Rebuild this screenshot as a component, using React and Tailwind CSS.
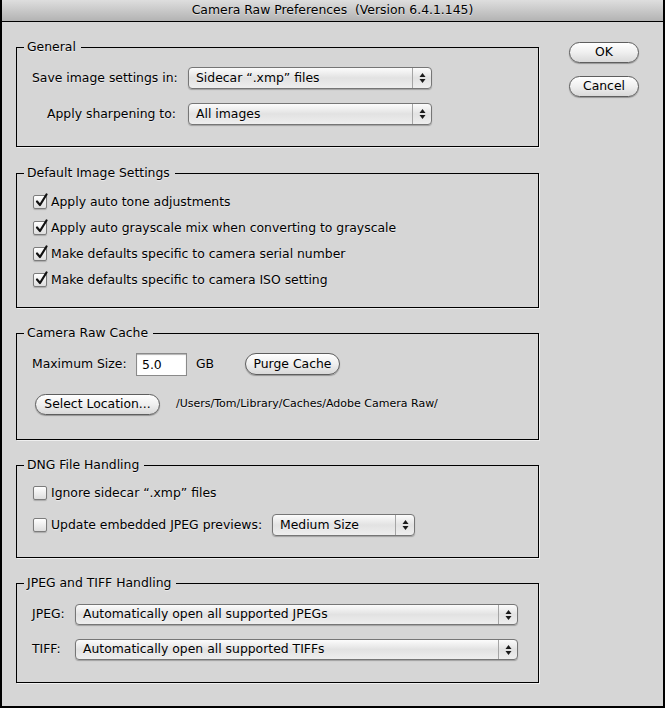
import React from "react";

function Arrows() {
  return (
    <svg width="7" height="12" viewBox="0 0 7 12">
      <polygon points="0.5,5 3.5,1 6.5,5" fill="#1a1a1a" />
      <polygon points="0.5,7 3.5,11 6.5,7" fill="#1a1a1a" />
    </svg>
  );
}

function Popup({ width, height = "h-[22px]", children }) {
  return (
    <div
      className={`${width} ${height} flex items-center rounded-[4px] border border-[#767676] bg-linear-to-b from-[#fcfcfc] via-[#e2e2e2] to-[#eeeeee] shadow-[0_1px_1px_rgba(0,0,0,0.25)]`}
    >
      <span className="flex-1 pl-[7px] truncate">{children}</span>
      <div className="w-[19px] h-full border-l border-[#a5a5a5] flex items-center justify-center">
        <Arrows />
      </div>
    </div>
  );
}

function PillButton({ width, height = "h-[21px]", children }) {
  return (
    <button
      className={`${width} ${height} rounded-full border border-[#5e5e5e] bg-linear-to-b from-white via-[#efefef] to-[#d9d9d9] shadow-[0_1px_1px_rgba(0,0,0,0.3)] flex items-center justify-center leading-none`}
    >
      {children}
    </button>
  );
}

function Checkbox({ checked }) {
  return (
    <span className="relative w-[14px] h-[14px] rounded-[2px] border border-[#7c7c7c] bg-linear-to-b from-white to-[#dedede] shadow-[0_1px_1px_rgba(0,0,0,0.2)] shrink-0">
      {checked && (
        <svg
          className="absolute left-[1px] top-[-3px]"
          width="13"
          height="15"
          viewBox="0 0 13 15"
        >
          <path
            d="M2 8.5 L5 12 L11.5 1.5"
            fill="none"
            stroke="#111"
            strokeWidth="2.2"
            strokeLinecap="round"
            strokeLinejoin="round"
          />
        </svg>
      )}
    </span>
  );
}

function CheckRow({ checked, children }) {
  return (
    <div className="h-[20px] flex items-center gap-[4px]">
      <Checkbox checked={checked} />
      <span className="whitespace-nowrap">{children}</span>
    </div>
  );
}

function Group({ title, height, children }) {
  return (
    <fieldset className={`${height} w-[523px] border border-black shadow-[1px_1px_0_rgba(255,255,255,0.6)]`}>
      <legend className="ml-[7px] pl-[3px] pr-[5px] leading-[16px]">{title}</legend>
      {children}
    </fieldset>
  );
}

export default function App() {
  return (
    <div className="w-[665px] h-[708px] bg-[#d6d6d6] border-x-2 border-b-2 border-black flex flex-col font-['DejaVu_Sans',sans-serif] text-[12.4px] text-black [text-shadow:0_1px_1px_rgba(255,255,255,0.6)]">
      <div className="h-[22px] shrink-0 border-b border-black bg-linear-to-b from-[#dedede] to-[#b3b3b3] flex items-center justify-center whitespace-pre">
        Camera Raw Preferences  (Version 6.4.1.145)
      </div>

      <div className="flex pl-[14px] pt-[17px]">
        <div className="flex flex-col gap-[17px]">
          <Group title="General" height="h-[108px]">
            <div className="pt-[12px] pl-[15px] flex flex-col gap-[14px]">
              <div className="h-[22px] flex items-center gap-[12px]">
                <span className="w-[144px] text-right whitespace-nowrap">Save image settings in:</span>
                <Popup width="w-[244px]">Sidecar “.xmp” files</Popup>
              </div>
              <div className="h-[22px] flex items-center gap-[12px]">
                <span className="w-[144px] text-right whitespace-nowrap">Apply sharpening to:</span>
                <Popup width="w-[244px]">All images</Popup>
              </div>
            </div>
          </Group>

          <Group title="Default Image Settings" height="h-[143px] mt-[1px]">
            <div className="pt-[11px] pl-[16px] flex flex-col gap-[6px]">
              <CheckRow checked>Apply auto tone adjustments</CheckRow>
              <CheckRow checked>Apply auto grayscale mix when converting to grayscale</CheckRow>
              <CheckRow checked>Make defaults specific to camera serial number</CheckRow>
              <CheckRow checked>Make defaults specific to camera ISO setting</CheckRow>
            </div>
          </Group>

          <Group title="Camera Raw Cache" height="h-[115px]">
            <div className="pt-[11px] pl-[15px] flex flex-col gap-[18px]">
              <div className="h-[24px] flex items-center">
                <span className="w-[104px] whitespace-nowrap">Maximum Size:</span>
                <div className="w-[51px] h-[23px] bg-white border border-[#8a8a8a] shadow-[inset_0_1px_1px_rgba(0,0,0,0.3)] flex items-center pl-[5px] pt-[2px]">
                  5.0
                </div>
                <span className="ml-[9px] w-[49px]">GB</span>
                <PillButton width="w-[95px]" height="h-[22px]">Purge Cache</PillButton>
              </div>
              <div className="h-[21px] flex items-center">
                <div className="ml-[3px]">
                  <PillButton width="w-[125px]">Select Location...</PillButton>
                </div>
                <span className="ml-[16px] text-[11px] whitespace-nowrap">/Users/Tom/Library/Caches/Adobe Camera Raw/</span>
              </div>
            </div>
          </Group>

          <Group title="DNG File Handling" height="h-[101px]">
            <div className="pt-[10px] pl-[16px] flex flex-col gap-[11px]">
              <CheckRow>Ignore sidecar “.xmp” files</CheckRow>
              <div className="h-[22px] flex items-center">
                <div className="w-[239px]">
                  <CheckRow>Update embedded JPEG previews:</CheckRow>
                </div>
                <Popup width="w-[143px]">Medium Size</Popup>
              </div>
            </div>
          </Group>

          <Group title="JPEG and TIFF Handling" height="h-[108px]">
            <div className="pt-[13px] pl-[15px] flex flex-col gap-[14px]">
              <div className="h-[21px] flex items-center">
                <span className="w-[43px]">JPEG:</span>
                <Popup width="w-[443px]" height="h-[21px]">Automatically open all supported JPEGs</Popup>
              </div>
              <div className="h-[21px] flex items-center">
                <span className="w-[43px]">TIFF:</span>
                <Popup width="w-[443px]" height="h-[21px]">Automatically open all supported TIFFs</Popup>
              </div>
            </div>
          </Group>
        </div>

        <div className="ml-[30px] mt-[3px] flex flex-col gap-[13px]">
          <PillButton width="w-[70px]">OK</PillButton>
          <PillButton width="w-[70px]">Cancel</PillButton>
        </div>
      </div>
    </div>
  );
}
